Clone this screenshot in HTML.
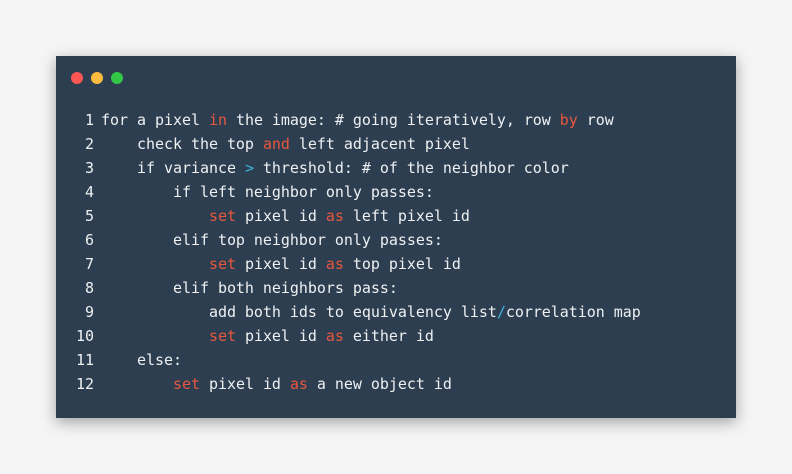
<!DOCTYPE html>
<html><head><style>
body{margin:0;background:#f5f5f5;width:792px;height:474px;position:relative;overflow:hidden}
.card{position:absolute;left:56px;top:56px;width:680px;height:362px;background:#2c3e50;box-shadow:0 4px 14px rgba(0,0,0,.35)}
.dot{position:absolute;top:15.5px;width:12px;height:12px;border-radius:50%}
pre{position:absolute;left:0;top:52px;margin:0;font:15px/24px "DejaVu Sans Mono","Liberation Mono",monospace;letter-spacing:-0.035px;color:#eef0f2}
.n{display:inline-block;width:38px;text-align:right;margin-right:7px;color:#eef0f2}
.k{color:#e9573f}.o{color:#3fb4e0}
</style></head><body>
<div class="card">
<div class="dot" style="left:15px;background:#fc5753"></div>
<div class="dot" style="left:35px;background:#fdbc40"></div>
<div class="dot" style="left:55px;background:#33c748"></div>
<pre><span class="n">1</span>for a pixel <span class="k">in</span> the image: # going iteratively, row <span class="k">by</span> row
<span class="n">2</span>    check the top <span class="k">and</span> left adjacent pixel
<span class="n">3</span>    if variance <span class="o">&gt;</span> threshold: # of the neighbor color
<span class="n">4</span>        if left neighbor only passes:
<span class="n">5</span>            <span class="k">set</span> pixel id <span class="k">as</span> left pixel id
<span class="n">6</span>        elif top neighbor only passes:
<span class="n">7</span>            <span class="k">set</span> pixel id <span class="k">as</span> top pixel id
<span class="n">8</span>        elif both neighbors pass:
<span class="n">9</span>            add both ids to equivalency list<span class="o">/</span>correlation map
<span class="n">10</span>            <span class="k">set</span> pixel id <span class="k">as</span> either id
<span class="n">11</span>    else:
<span class="n">12</span>        <span class="k">set</span> pixel id <span class="k">as</span> a new object id</pre>
</div>
</body></html>
